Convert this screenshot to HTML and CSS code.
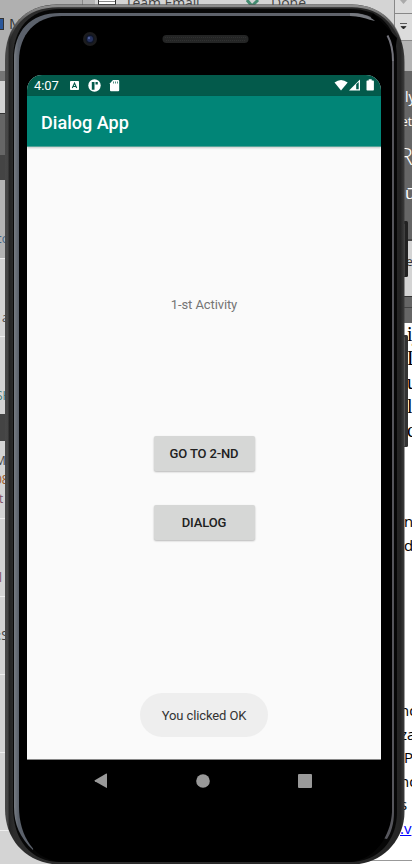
FILE: index.html
```html
<!DOCTYPE html>
<html lang="en">
<head>
<meta charset="utf-8">
<title>Dialog App</title>
<link rel="stylesheet" href="styles.css">
</head>
<body>
<div class="scene">
  <div class="desktop">
    <div class="left">
      <div class="ribbon ribbon-left"><i class="doc-icon"></i><span>M</span></div>
      <div class="band mid h10"></div>
      <div class="band light h33 edge"></div>
      <div class="band gray h41"></div>
      <div class="band dark h25"></div>
      <div class="band silver h78"><span class="frag blue pad50">co</span></div>
      <div class="band light h78 row"><span class="frag pad50 shift">a</span></div>
      <div class="band light h78 row"><span class="frag teal pad50">SH</span></div>
      <div class="band dark h27"></div>
      <div class="band light h77"><span class="frag line">M</span><span class="frag line orange">08</span><span class="frag line plum">t</span></div>
      <div class="band light h78 row"><span class="frag plum pad50">l</span></div>
      <div class="band light h78 row"><span class="frag pad32">:S</span></div>
      <div class="band light h78 row"></div>
      <div class="band light h78 row"></div>
      <div class="band light h34 row"></div>
    </div>
    <div class="top">
      <div class="tab"><i class="box"></i><span class="team">Team Email</span><svg class="tick" width="14" height="9" viewBox="0 0 14 9"><path d="M1 0L6 6L12 0" fill="none" stroke="#438b70" stroke-width="3"/></svg><span>Done</span></div>
    </div>
    <div class="right">
      <div class="arrow off"><svg width="9" height="7" viewBox="0 0 9 7"><path d="M1 1h7L4.500 5z" fill="#aaa"/></svg></div>
      <div class="arrow"><svg width="9" height="8" viewBox="0 0 9 8"><path d="M1 .5h7M2 3.500h5L4.500 6z" fill="#222" stroke="#222" stroke-width=".7"/></svg></div>
      <div class="band silver h31"></div>
      <div class="band gray heading"><span class="ly">ly</span><span class="et">et</span><span class="big">R</span><span class="u">ū</span></div>
      <div class="band light tools"><span>e</span></div>
      <div class="band gray rulerbar"></div>
      <div class="paper">
        <p class="serif">ij</p><p class="serif">L</p><p class="serif">ų</p><p class="serif">l</p><p class="serif c">c</p>
        <p class="n">n</p><p class="d">d</p>
        <p class="nd">nd</p><p>za</p><p>,P</p><p>nd</p><p class="s">s</p><p class="link">.v</p>
      </div>
    </div>
  </div>

  <div class="phone">
    <svg class="frame" width="412" height="864" viewBox="0 0 412 864">
      <defs>
        <linearGradient id="shell" x1="0" x2="1" y1="0" y2="0"><stop offset="0" stop-color="#484848"/><stop offset=".007" stop-color="#454545"/><stop offset=".011" stop-color="#242424"/><stop offset=".022" stop-color="#2d2d2d"/><stop offset=".98" stop-color="#262626"/><stop offset=".99" stop-color="#242424"/><stop offset="1" stop-color="#3d3d3d"/></linearGradient>
        <linearGradient id="rim" x1="0" x2="1" y1="0" y2="0"><stop offset="0" stop-color="#777c83"/><stop offset=".012" stop-color="#5b616b"/><stop offset=".9" stop-color="#60636b"/><stop offset="1" stop-color="#55555b"/></linearGradient>
        <linearGradient id="fade" x1="0" x2="0" y1="0" y2="1"><stop offset="0" stop-color="#8d8d8d"/><stop offset=".2" stop-color="#6d6d6d"/><stop offset=".7" stop-color="#555" stop-opacity="0"/></linearGradient>
      </defs>
      <rect x="403" y="221" width="5" height="56" rx="1.500" fill="#222"/>
      <path d="M404.500 224v52" stroke="#424242"/>
      <rect x="403" y="335" width="5" height="112" rx="1.500" fill="#333"/>
      <path d="M404.500 337v109" stroke="#656565"/>
      <path d="M5 60C5 27 25 4.500 57 4.500H352C384 4.500 404.500 30 404.500 62V812C404.500 840 382 864.500 352 864.500H60C28 864.500 5 841 5 809Z" fill="url(#shell)"/>
      <path d="M6 60C6 27 25 6 58 6H352C382 6 403 27 403 60" fill="none" stroke="url(#fade)" stroke-width="2.500"/>
      <path d="M13 59C13 29 29 9 60 9H350C381 9 397 27 397 60V812C397 841 378 862 350 862H60C31 862 13 840 13 807Z" fill="#070707"/>
      <path d="M14 60C14 31 30 13 60 13H350C358 13 366 14 373 18V60H394V812C394 824 391 833 387 839L370 835H35L33 850C20 838 14 824 14 807Z" fill="url(#rim)"/>
      <path d="M19 61C19 35 35 16 62 16H352C362 16 369 18 375 22L392 60V812C391 835 375 862 347 862H64C34 862 19 835 19 807Z" fill="#000"/>
      <path d="M373 13L397 38L394 60H370V20Z" fill="#000"/>
      <path d="M350 13C361 13 370 16 375 21C367 19 359 16 350 16Z" fill="#777a80"/>
      <path d="M387.500 35.500C391 42 393 49 393 61" fill="none" stroke="#74747c" stroke-width="2"/>
      <circle cx="90" cy="39" r="7" fill="#1c1c1e"/><circle cx="90" cy="39" r="4.500" fill="#101626"/><circle cx="90" cy="39" r="3" fill="#26315c"/><circle cx="89" cy="38" r="1.200" fill="#4d5f99"/>
      <rect x="162.500" y="35" width="86" height="8" rx="4" fill="#242525"/>
      <path d="M165 37.500H246M166 40.500H245" stroke="#303131" stroke-dasharray="1 1"/>
    </svg>

    <div class="device">
      <main class="screen">
        <div class="status">
          <span class="clock">4:07</span>
          <svg class="notices" width="54" height="14" viewBox="0 0 54 14">
            <rect y="2" width="9" height="9" rx=".8" fill="#fff"/><path d="M2.300 9L4.500 4L6.700 9M3.200 7.500H5.800" fill="none" stroke="#035a4b" stroke-width="1.100"/>
            <circle cx="24.500" cy="6.500" r="6.200" fill="#fff"/><path d="M21.800 3H24.500V10.800H21.800Z" fill="#035a4b"/><path d="M25.500 3h2.300v2.500h-2.300z" fill="#035a4b"/>
            <path d="M40 4.300L43 1h5.200q1 0 1 1v9.200q0 1-1 1H41q-1 0-1-1z" fill="#fff"/><path d="M43.500 2.500v2M45.500 2.500v2M47.500 2.500v2" stroke="#035a4b" stroke-width=".7"/>
          </svg>
          <svg class="signals" width="41" height="13" viewBox="0 0 41 13">
            <path d="M.5 3.500Q7 -1.500 13.700 3.500L7 11.500Z" fill="#fff"/>
            <path d="M15 11.500L26 .5V11.500Z" fill="#fff"/><path d="M22.200 5.200L24.700 3V10.300H22.200Z" fill="#035a4b"/>
            <path d="M32.500 2.300q0-.8.800-.8h1.400V.3h3v1.200h1.400q.8 0 .8.800v8.400q0 .8-.8.800h-5.800q-.8 0-.8-.8z" fill="#fff"/>
          </svg>
        </div>
        <header class="appbar"><h1>Dialog App</h1></header>
        <section class="content">
          <p class="label">1-st Activity</p>
          <button class="btn">GO TO 2-ND</button>
          <button class="btn second">DIALOG</button>
          <div class="toast">You clicked OK</div>
        </section>
      </main>
      <nav class="nav">
        <svg width="14" height="16" viewBox="0 0 14 16"><path d="M.8 7.200L12.300.5Q13 .3 13 1V14.500Q13 15.200 12.300 14.800L.8 8.200Q0 7.700.8 7.200Z" fill="#999"/></svg>
        <svg width="14" height="16" viewBox="0 0 14 16"><circle cx="7" cy="8" r="6.800" fill="#999"/></svg>
        <svg width="14" height="16" viewBox="0 0 14 16"><rect y="1" width="14" height="14" rx="1" fill="#999"/></svg>
      </nav>
    </div>
  </div>
</div>
</body>
</html>
```

FILE: styles.css
```css
* { box-sizing: border-box; }
body { margin: 0; font-family: Roboto, sans-serif; }
p, h1 { margin: 0; }
.scene { position: relative; width: 412px; height: 864px; overflow: hidden; background: #fff; }
.desktop { display: grid; grid-template-columns: 82px 312px 18px; height: 864px; font-family: "Open Sans", sans-serif; }
.left, .right, .top { overflow: hidden; }
.left { background: #d4d4d4; }
.band { overflow: hidden; }
.light { background: #d4d4d4; }
.silver { background: #b4b4b4; }
.gray { background: #666; }
.mid { background: #757575; }
.dark { background: #444; }
.edge { border-bottom: 1px solid #333; }
.row { border-top: 1px solid #eee; }
.h10 { height: 10px; }
.h25 { height: 25px; }
.h27 { height: 27px; }
.h31 { height: 30px; }
.h33 { height: 33px; }
.h34 { height: 34px; }
.h41 { height: 41px; }
.h77 { height: 77px; }
.h78 { height: 78px; }
.ribbon { height: 71px; background: #b0b0b0; }
.ribbon-left { display: flex; gap: 5px; padding-top: 13px; font-size: 15px; line-height: 20px; color: #333; }
.doc-icon { width: 4px; height: 12px; margin-top: 5px; background: #2b579a; border: 1px solid #333; border-left: 0; }
.frag { display: block; font-size: 12px; line-height: 18px; color: #444; }
.blue { color: #426487; }
.teal { color: #417b77; }
.orange { color: #9a5520; }
.plum { color: #805069; }
.pad50 { padding-top: 50px; margin-left: -4px; }
.shift { margin-left: 2px; }
.plum.pad50 { margin-left: -1px; }
.pad32 { padding-top: 30px; margin-left: -2px; }
.line { line-height: 19px; margin-left: -5px; }
.line:first-child { padding-top: 10px; }
.line.plum { margin-left: -1px; }
.top { background: linear-gradient(#d4d4d4 323px, #fff 323px 860px, #999 860px 861px, #fff 861px); }
.tab { display: flex; height: 12px; border-left: 1px solid #888; font-size: 14px; line-height: 6px; color: #444; background: linear-gradient(90deg, #b5b5b5 12px, #d4d4d4 12px); }
.box { width: 18px; height: 9px; margin: -4px 9px 0 15px; border: 1px solid #333; background: linear-gradient(#fff 4px, #888 4px 5px, #fff 5px); }
.team { width: 121px; letter-spacing: -.1px; }
.tick { margin: 0 11px 0 0; }
.right { background: linear-gradient(#fff 860px, #999 860px 861px, #fff 861px); }
.arrow { height: 27px; display: flex; justify-content: center; align-items: center; background: #dcdcdc; border: solid #888; border-width: 0 0 1px 1px; }
.arrow.off { height: 14px; padding-bottom: 9px; }
.heading { height: 168px; display: flex; flex-direction: column; color: #fff; padding: 15px 0 0 11px; }
.ly { font-size: 14px; line-height: 22px; }
.et { font-size: 12px; line-height: 28px; margin-left: -4px; }
.big { font-size: 23px; line-height: 40px; font-weight: 300; margin-left: -6px; }
.u { font-size: 17px; line-height: 34px; }
.tools { height: 57px; border-top: 2px solid #444; padding: 12px 0 0 12px; font-size: 12px; line-height: 18px; color: #333; }
.rulerbar { height: 27px; border-top: 1px solid #333; background: linear-gradient(#666 10px, #444 10px 11px, #666 11px); }
.paper { padding-left: 6px; font-size: 15px; line-height: 23.500px; color: #000; white-space: nowrap; }
.paper p { height: 23.500px; }
.serif { font-family: "Liberation Serif", serif; font-size: 20px; padding-left: 7px; }
.paper .serif { height: 24px; }
.paper .n { margin-top: 67px; padding-left: 4px; }
.paper .d { padding-left: 4px; }
.paper .nd { margin-top: 142px; }
.link { color: #00f; text-decoration: underline; }
.phone { position: absolute; inset: 0; }
.frame { position: absolute; inset: 0; }
.device { position: relative; width: 354px; margin: 75px 0 0 27px; }
.screen { height: 685px; overflow: hidden; border-radius: 15px 15px 0 0; background: #fafafa; border-bottom: 1px solid #888; }
.status { height: 21px; display: flex; align-items: center; padding: 0 6px 0 7px; background: #035a4b; color: #fff; }
.clock { width: 36px; font-size: 13px; line-height: 21px; letter-spacing: -.1px; }
.notices { margin-top: 1px; }
.signals { margin-left: auto; }
.appbar { height: 51px; padding: 0 14px; background: #018577; border-bottom: 1px solid #54a297; box-shadow: 0 1px 2px #0003; }
.appbar h1 { color: #fff; font-size: 18px; line-height: 53px; font-weight: 500; letter-spacing: .04px; }
.content { display: flex; flex-direction: column; align-items: center; }
.label { margin-top: 148px; font-size: 13px; line-height: 20px; color: #757575; letter-spacing: -.1px; }
.btn { width: 101px; height: 35px; margin: 121px 0 0; padding: 0; border: 0; border-radius: 2px; background: #d6d7d6; box-shadow: 0 1px 2px #0004; color: #212121; font: 500 13px/35px Roboto, sans-serif; letter-spacing: -.12px; }
.btn.second { margin-top: 34px; }
.toast { width: 128px; height: 44px; margin-top: 153px; border-radius: 22px; background: #eee; color: #333; text-align: center; font-size: 13px; line-height: 45px; letter-spacing: -.1px; }
.nav { display: flex; justify-content: space-between; width: 218px; margin: 13px 0 0 67px; }
```
